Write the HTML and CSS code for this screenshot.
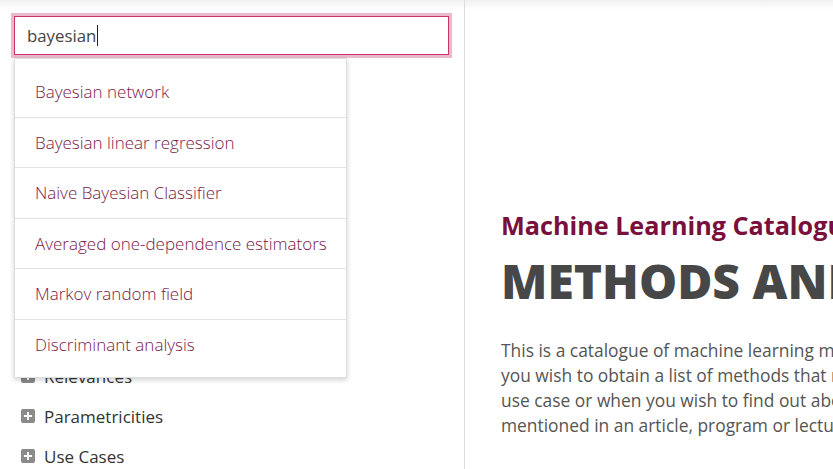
FILE: index.html
```html
<!DOCTYPE html>
<html>
<head>
<meta charset="utf-8">
<link rel="stylesheet" href="styles.css">
</head>
<body>
<div class="page">
  <aside class="sidebar">
    <div class="search">
      <span class="search-text">bayesian</span><span class="caret"></span>
    </div>
    <ul class="nav">
      <li class="nav-item"><span class="plus"></span>Methods</li>
      <li class="nav-item"><span class="plus"></span>Categories</li>
      <li class="nav-item"><span class="plus"></span>Problems</li>
      <li class="nav-item"><span class="plus"></span>Techniques</li>
      <li class="nav-item"><span class="plus"></span>Data Types</li>
      <li class="nav-item"><span class="plus"></span>Supervisions</li>
      <li class="nav-item"><span class="plus"></span>Outputs</li>
      <li class="nav-item"><span class="plus"></span>Relevances</li>
      <li class="nav-item"><span class="plus"></span>Parametricities</li>
      <li class="nav-item"><span class="plus"></span>Use Cases</li>
    </ul>
    <ul class="dropdown">
      <li class="option">Bayesian network</li>
      <li class="option">Bayesian linear regression</li>
      <li class="option">Naive Bayesian Classifier</li>
      <li class="option">Averaged one-dependence estimators</li>
      <li class="option">Markov random field</li>
      <li class="option">Discriminant analysis</li>
    </ul>
  </aside>
  <main class="main">
    <h2 class="subtitle">Machine Learning Catalogue</h2>
    <h1 class="title">METHODS AND PROBLEMS</h1>
    <p class="intro">This is a catalogue of machine learning methods and problems. It is useful when<br>you wish to obtain a list of methods that may be relevant to a particular<br>use case or when you wish to find out about a method you have seen<br>mentioned in an article, program or lecture.</p>
  </main>
</div>
</body>
</html>
```

FILE: styles.css
```css
html, body {
  margin: 0;
  padding: 0;
}
body {
  font-family: "Open Sans", "Liberation Sans", sans-serif;
  background: linear-gradient(#f1f1f1, #ffffff 10px);
  width: 833px;
  height: 469px;
  overflow: hidden;
}
.page {
  display: flex;
  height: 469px;
}
.sidebar {
  position: relative;
  width: 435px;
  flex: 0 0 435px;
  padding: 16px 15px 0 14px;
  border-right: 1px solid #dcdcdc;
}
.search {
  height: 37px;
  border: 1px solid #c7356b;
  box-shadow: 0 0 0 3px #eab9cb;
  background: #fff;
  display: flex;
  align-items: center;
  padding-left: 12px;
  font-size: 16.8px;
  color: #444;
}
.caret {
  display: inline-block;
  width: 1px;
  height: 21px;
  background: #222;
  margin-left: 1px;
}
.nav {
  list-style: none;
  margin: 21px 0 0 0;
  padding: 0;
}
.nav-item {
  height: 40px;
  display: flex;
  align-items: center;
  padding-left: 7px;
  font-size: 17px;
  color: #333;
}
.plus {
  position: relative;
  width: 14px;
  height: 14px;
  border-radius: 2px;
  background: #8a8a8a;
  margin-right: 9px;
  flex: 0 0 14px;
}
.plus::before,
.plus::after {
  content: "";
  position: absolute;
  background: #fff;
}
.plus::before {
  left: 3px;
  top: 6px;
  width: 8px;
  height: 2px;
}
.plus::after {
  left: 6px;
  top: 3px;
  width: 2px;
  height: 8px;
}
.dropdown {
  position: absolute;
  top: 58px;
  left: 14px;
  width: 331px;
  margin: 0;
  padding: 8px 0;
  list-style: none;
  background: #fff;
  border: 1px solid #dedede;
  box-shadow: 0 2px 5px rgba(0, 0, 0, 0.18);
}
.option {
  padding: 13px 20px 12.5px;
  line-height: 24px;
  font-size: 17px;
  font-weight: 300;
  color: #7a1847;
  border-bottom: 1px solid #e3e3e3;
  white-space: nowrap;
}
.option:last-child {
  border-bottom: none;
}
.main {
  flex: 1;
  padding: 210px 0 0 36px;
  overflow: hidden;
  white-space: nowrap;
}
.subtitle {
  margin: 0;
  font-size: 25.2px;
  line-height: 30px;
  font-weight: 700;
  color: #7a0f3b;
}
.title {
  margin: 13px 0 0 0;
  font-size: 48px;
  line-height: 56px;
  font-weight: 800;
  color: #474747;
}
.intro {
  margin: 29px 0 0 0;
  font-size: 17.4px;
  line-height: 25px;
  color: #555;
}
```
